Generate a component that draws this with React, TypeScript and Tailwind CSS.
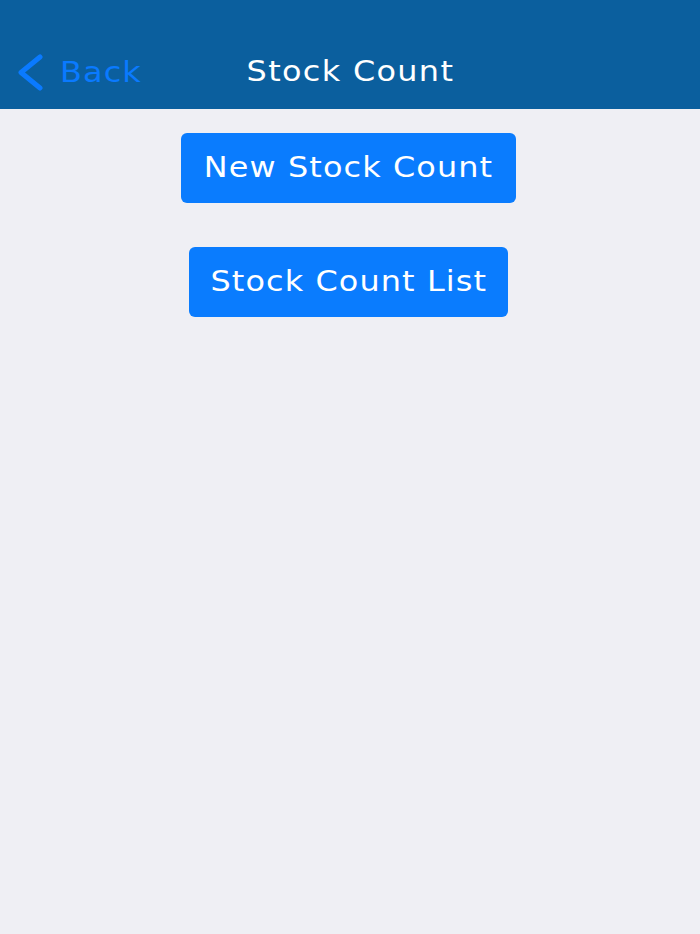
import React from 'react';

export default function App() {
  return (
    <div className="min-h-[934px] w-full bg-[#efeff4]" style={{ fontFamily: '"DejaVu Sans", "Liberation Sans", sans-serif' }}>
      <header className="relative flex h-[109px] items-end justify-center bg-[#0b5f9e] pb-[23px]">
        <button className="absolute left-[15px] top-[54px] flex items-center gap-[16px] text-[#0a7aff]">
          <svg width="29" height="37" viewBox="0 0 29 37" fill="none">
            <path d="M25 3 L6 18.5 L25 34" stroke="#0a7aff" strokeWidth="5" strokeLinecap="round" strokeLinejoin="round" />
          </svg>
          <span className="inline-block origin-left scale-x-[1.1] text-[29px] leading-none tracking-[1px]">Back</span>
        </button>
        <h1 className="inline-block scale-x-[1.1] text-[29px] leading-none tracking-[1.2px] text-white">Stock Count</h1>
      </header>
      <main className="flex flex-col items-center gap-[44px] pr-[3px] pt-[24px]">
        <button className="h-[70px] w-[335px] rounded-[6px] bg-[#0a7cfe] text-white">
          <span className="inline-block scale-x-[1.1] text-[29px] tracking-[1px]">New Stock Count</span>
        </button>
        <button className="h-[70px] w-[319px] rounded-[6px] bg-[#0a7cfe] text-white">
          <span className="inline-block scale-x-[1.1] text-[29px] tracking-[1px]">Stock Count List</span>
        </button>
      </main>
    </div>
  );
}
